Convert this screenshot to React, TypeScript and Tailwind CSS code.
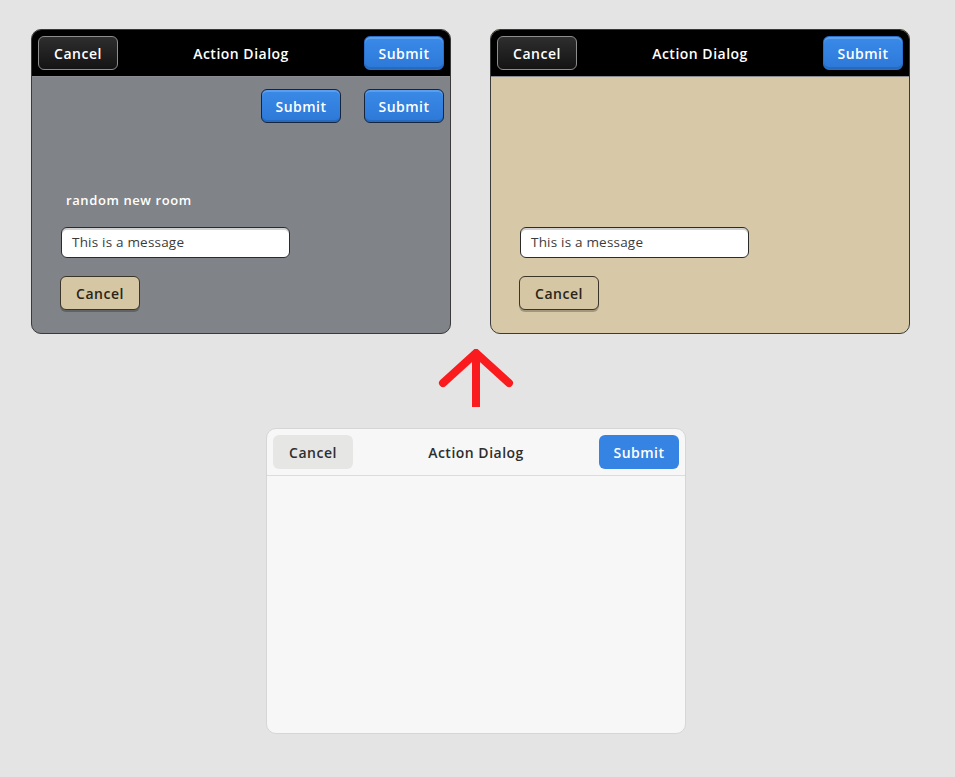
import React from 'react';

const font = { fontFamily: '"Open Sans", "DejaVu Sans", sans-serif' };

function DarkHeader() {
  return (
    <div className="flex h-[47px] items-center justify-between border-b border-[#8a8c8f] bg-black px-[6px]">
      <button className="h-[34px] w-[80px] rounded-[6px] border border-[#8d8d8d] bg-gradient-to-b from-[#2e2e2e] to-[#141414] text-[14px] font-semibold tracking-[0.5px] text-white">
        Cancel
      </button>
      <span className="text-[14px] font-semibold tracking-[0.5px] text-white">Action Dialog</span>
      <BlueButton edge="border-[#2a6fc9]" />
    </div>
  );
}

function BlueButton({ edge }: { edge: string }) {
  return (
    <button
      className={`h-[34px] w-[80px] rounded-[6px] border ${edge} bg-gradient-to-b from-[#3a8ae8] to-[#2c78d8] text-[14px] font-semibold tracking-[0.5px] text-white shadow-[inset_0_2px_0_rgba(255,255,255,0.18),inset_0_-2px_0_rgba(0,0,0,0.12)]`}
    >
      Submit
    </button>
  );
}

function MessageInput() {
  return (
    <div className="flex h-[31px] w-[229px] items-center rounded-[6px] border border-[#2b2b2b] bg-white px-[10px] text-[13.5px] tracking-[0.2px] text-[#3b3b3b] shadow-[inset_0_2px_0_rgba(0,0,0,0.18)]">
      This is a message
    </div>
  );
}

function BeigeCancel() {
  return (
    <button className="mt-[18px] ml-[-1px] h-[34px] w-[80px] rounded-[6px] border border-[#3b3428] bg-[#d5c7a3] text-[14px] font-semibold tracking-[0.5px] text-[#2a2419] shadow-[0_2px_0_rgba(0,0,0,0.25)]">
      Cancel
    </button>
  );
}

export default function App() {
  return (
    <div className="min-h-[777px] w-full bg-[#e4e4e4] pt-[29px]" style={font}>
      <div className="flex gap-[39px] pl-[31px]">
        {/* grey themed dialog */}
        <div className="flex h-[305px] w-[420px] flex-col overflow-hidden rounded-[10px] border border-[#3a3a3a] bg-[#808387]">
          <DarkHeader />
          <div className="flex flex-1 flex-col px-[29px] pb-[23px]">
            <div className="mr-[-23px] mt-[12px] flex justify-end gap-[23px]">
              <BlueButton edge="border-[#15253d]" />
              <BlueButton edge="border-[#15253d]" />
            </div>
            <div className="flex-1" />
            <span className="mb-[17px] ml-[5px] text-[13px] font-semibold tracking-[0.6px] text-white">random new room</span>
            <MessageInput />
            <BeigeCancel />
          </div>
        </div>

        {/* beige themed dialog */}
        <div className="flex h-[305px] w-[420px] flex-col overflow-hidden rounded-[10px] border border-[#3a3a3a] bg-[#d7c9a8]">
          <DarkHeader />
          <div className="flex flex-1 flex-col px-[29px] pb-[23px]">
            <div className="flex-1" />
            <MessageInput />
            <BeigeCancel />
          </div>
        </div>
      </div>

      <div className="flex flex-col items-center pr-[3px]">
        <svg width="76" height="58" viewBox="0 0 76 58" className="mt-[15px]">
          <polyline points="5,34 38,4 71,34" fill="none" stroke="#fa1b1f" strokeWidth="8" strokeLinecap="round" strokeLinejoin="miter" />
          <line x1="38" y1="6" x2="38" y2="58" stroke="#fa1b1f" strokeWidth="8" />
        </svg>

        {/* default themed dialog */}
        <div className="mt-[21px] flex h-[306px] w-[420px] flex-col overflow-hidden rounded-[10px] border border-[#d6d6d6] bg-[#f7f7f7]">
          <div className="flex h-[47px] items-center justify-between border-b border-[#dcdcdc] px-[6px]">
            <button className="h-[34px] w-[80px] rounded-[6px] bg-[#e6e6e5] text-[14px] font-semibold tracking-[0.5px] text-[#2e2e2e]">
              Cancel
            </button>
            <span className="text-[14px] font-semibold tracking-[0.5px] text-[#2e2e2e]">Action Dialog</span>
            <button className="h-[34px] w-[80px] rounded-[6px] bg-[#3584e4] text-[14px] font-semibold tracking-[0.5px] text-white">
              Submit
            </button>
          </div>
          <div className="flex-1" />
        </div>
      </div>
    </div>
  );
}
